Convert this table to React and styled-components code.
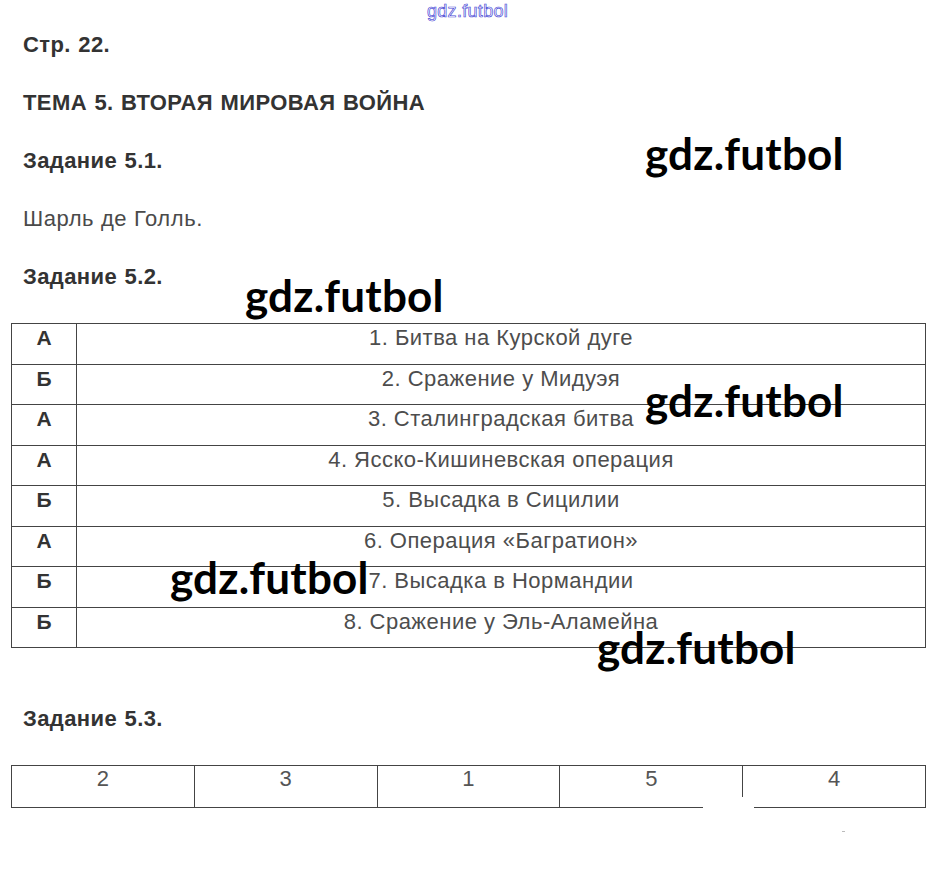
import React from "react";
import styled, { createGlobalStyle } from "styled-components";

const Global = createGlobalStyle`
  html, body { margin: 0; padding: 0; background: #fff; }
  body { font-family: "Liberation Sans", Arial, sans-serif; }
`;

const Page = styled.div`
  position: relative;
  display: flex;
  flex-direction: column;
  width: 937px;
  min-height: 887px;
  box-sizing: border-box;
  padding: 33px 11px 0;
  color: #333;
`;

const Para = styled.p`
  margin: 0 0 34px;
  padding-left: 12px;
  font-size: 22px;
  line-height: 24px;
  font-weight: ${(p) => (p.$bold ? 700 : 400)};
  color: ${(p) => (p.$bold ? "#333" : "#4a4a4a")};
  letter-spacing: ${(p) => (p.$bold ? "0.4px" : "0.6px")};
  word-spacing: ${(p) => (p.$bold ? "1px" : "0")};
`;

const MatchTable = styled.div`
  display: grid;
  grid-template-columns: 65px 1fr;
  grid-auto-rows: 40.5px;
  border-top: 1px solid #444;
  border-left: 1px solid #444;
  margin-bottom: 59px;
`;

const Cell = styled.div`
  box-sizing: border-box;
  border-right: 1px solid #444;
  border-bottom: 1px solid #444;
  padding-top: 2px;
  text-align: center;
  font-size: ${(p) => (p.$letter ? 21 : 22)}px;
  line-height: 24px;
  font-weight: ${(p) => (p.$letter ? 700 : 400)};
  color: ${(p) => (p.$letter ? "#333" : "#4d4d4d")};
  letter-spacing: ${(p) => (p.$letter ? "0" : "0.48px")};
`;

const OrderTable = styled.div`
  position: relative;
  display: grid;
  grid-template-columns: repeat(5, 1fr);
  height: 42px;
  border-top: 1px solid #444;
  border-left: 1px solid #444;
`;

const OrderCell = styled.div`
  box-sizing: border-box;
  border-right: 1px solid #444;
  border-bottom: 1px solid #444;
  padding-top: 1px;
  text-align: center;
  font-size: 22px;
  line-height: 24px;
  color: #555;
`;

const Patch = styled.div`
  position: absolute;
  left: 691px;
  top: 31px;
  width: 51px;
  height: 14px;
  background: #fff;
`;

const Watermark = styled.div`
  position: absolute;
  left: ${(p) => p.$x}px;
  top: ${(p) => p.$y}px;
  font-family: Lato, "Noto Sans", sans-serif;
  font-weight: 700;
  font-size: 44px;
  line-height: 44px;
  letter-spacing: 0.2px;
  color: #000;
  white-space: nowrap;
  pointer-events: none;
`;

const TopMark = styled.div`
  position: absolute;
  left: 427px;
  top: 1px;
  font-family: "Liberation Sans", Arial, sans-serif;
  font-size: 18px;
  line-height: 20px;
  color: #fff;
  -webkit-text-stroke: 0.7px #4b4bd6;
  letter-spacing: 0.3px;
`;

const Speck = styled.div`
  position: absolute;
  left: 842px;
  top: 831px;
  width: 3px;
  height: 1px;
  background: #bbb;
`;

const rows = [
  ["А", "1. Битва на Курской дуге"],
  ["Б", "2. Сражение у Мидуэя"],
  ["А", "3. Сталинградская битва"],
  ["А", "4. Ясско-Кишиневская операция"],
  ["Б", "5. Высадка в Сицилии"],
  ["А", "6. Операция «Багратион»"],
  ["Б", "7. Высадка в Нормандии"],
  ["Б", "8. Сражение у Эль-Аламейна"],
];

const order = ["2", "3", "1", "5", "4"];

const marks = [
  [645, 131],
  [245, 273],
  [645, 378],
  [170, 555],
  [597, 625],
];

export default function App() {
  return (
    <>
      <Global />
      <Page>
        <TopMark>gdz.futbol</TopMark>
        <Para $bold>Стр. 22.</Para>
        <Para $bold>ТЕМА 5. ВТОРАЯ МИРОВАЯ ВОЙНА</Para>
        <Para $bold>Задание 5.1.</Para>
        <Para>Шарль де Голль.</Para>
        <Para $bold>Задание 5.2.</Para>
        <MatchTable>
          {rows.map(([l, t], i) => (
            <React.Fragment key={i}>
              <Cell $letter>{l}</Cell>
              <Cell>{t}</Cell>
            </React.Fragment>
          ))}
        </MatchTable>
        <Para $bold>Задание 5.3.</Para>
        <OrderTable>
          {order.map((n, i) => (
            <OrderCell key={i}>{n}</OrderCell>
          ))}
          <Patch />
        </OrderTable>
        {marks.map(([x, y], i) => (
          <Watermark key={i} $x={x} $y={y}>
            gdz.futbol
          </Watermark>
        ))}
        <Speck />
      </Page>
    </>
  );
}
